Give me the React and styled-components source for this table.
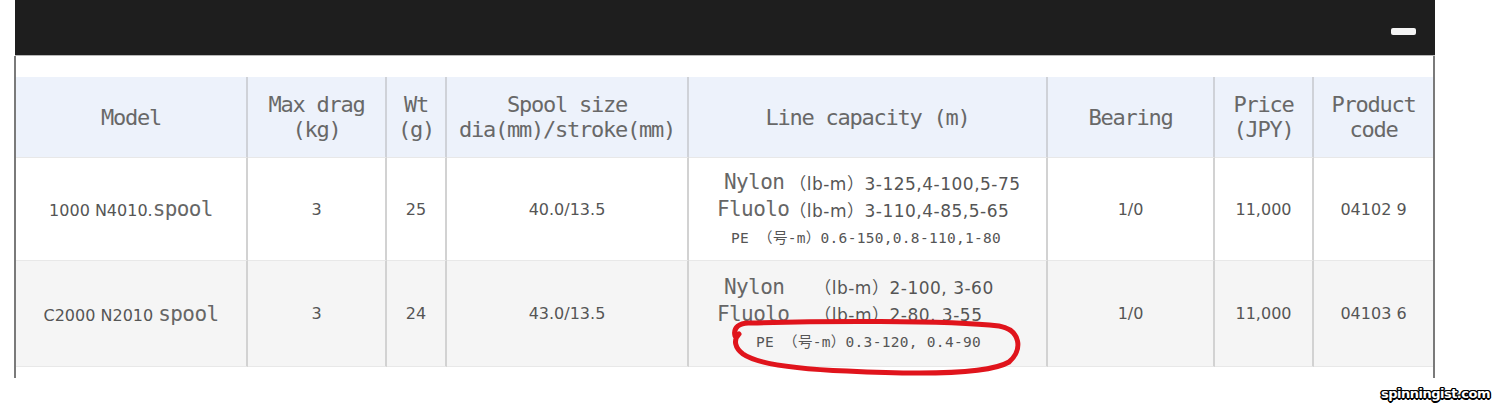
import React from "react";
import styled, { createGlobalStyle } from "styled-components";

const Global = createGlobalStyle`
  html, body { margin: 0; padding: 0; background: #fff; }
  * { box-sizing: border-box; }
`;

const MONO = `"DejaVu Sans Mono", "Noto Sans CJK JP", monospace`;
const SANS = `"DejaVu Sans", "Noto Sans CJK JP", sans-serif`;

const Page = styled.div`
  width: 1500px;
  height: 415px;
  background: #fff;
  overflow: hidden;
`;

const Panel = styled.div`
  margin-left: 14px;
  width: 1421px;
`;

const TopBar = styled.div`
  height: 56px;
  background: #1e1e1e;
  border-bottom: 1px solid #b8b8b8;
  margin-left: 1px;
  display: flex;
  justify-content: flex-end;
  align-items: flex-start;
  padding: 28px 19px 0 0;
`;

const MinusButton = styled.div`
  width: 25px;
  height: 7px;
  border-radius: 2px;
  background: #f4f4f4;
`;

const PanelBody = styled.div`
  border-left: 2px solid #7a7a7a;
  border-right: 2px solid #7a7a7a;
  padding: 21px 0 11px;
`;

const SpecGrid = styled.div`
  display: grid;
  grid-template-columns: 232px 139px 60px 242px 359px 167px 99px 119px;
  grid-template-rows: 80px 103px 107px;
`;

const HeadCell = styled.div`
  background: #edf2fb;
  border-right: ${(p) => (p.$last ? "none" : "2px solid #cfd2d8")};
  display: flex;
  align-items: center;
  justify-content: center;
  text-align: center;
  font-family: ${MONO};
  font-size: 22px;
  letter-spacing: -1.25px;
  line-height: 25px;
  color: #686868;
  white-space: pre;
`;

const BodyCell = styled.div`
  position: relative;
  background: ${(p) => (p.$alt ? "#f5f5f5" : "#ffffff")};
  border-right: ${(p) => (p.$last ? "none" : "2px solid #d2d2d2")};
  border-top: 1px solid #e8e8e8;
  border-bottom: ${(p) => (p.$alt ? "1px solid #e8e8e8" : "none")};
  display: flex;
  align-items: center;
  justify-content: center;
  font-family: ${SANS};
  font-size: 16px;
  color: #555;
  white-space: pre;
`;

const CapCell = styled(BodyCell)`
  flex-direction: column;
  align-items: stretch;
  justify-content: center;
`;

const CapLine = styled.div`
  height: 27px;
  display: flex;
  align-items: center;
  padding-left: ${(p) => p.$indent}px;
`;

const MonoWord = styled.span`
  font-family: ${MONO};
  font-size: 21px;
  letter-spacing: -0.6px;
  color: #666;
  margin-right: ${(p) => p.$gap || 0}px;
`;

const Spec = styled.span`
  font-family: ${SANS};
  font-size: 17px;
  letter-spacing: 0.5px;
  color: #555;
`;

const PeText = styled.span`
  font-family: ${MONO};
  font-size: 14.5px;
  letter-spacing: 0.3px;
  color: #555;
`;

const Annotation = styled.svg`
  position: absolute;
  left: 38px;
  top: 57px;
  width: 300px;
  height: 62px;
  overflow: visible;
  pointer-events: none;
`;

const Footer = styled.div`
  display: flex;
  justify-content: flex-end;
  padding: 8px 10px 0 0;
`;

const Watermark = styled.span`
  font-family: "DejaVu Sans", sans-serif;
  font-weight: bold;
  font-size: 13px;
  letter-spacing: -0.5px;
  color: #fff;
  text-shadow: 1.5px 0 0 #000, -1.5px 0 0 #000, 0 1.5px 0 #000, 0 -1.5px 0 #000,
    1px 1px 0 #000, -1px -1px 0 #000, 1px -1px 0 #000, -1px 1px 0 #000;
`;

const headers = [
  "Model",
  "Max drag\n(kg)",
  "Wt\n(g)",
  "Spool size\ndia(mm)/stroke(mm)",
  "Line capacity (m)",
  "Bearing",
  "Price\n(JPY)",
  "Product\ncode",
];

const rows = [
  {
    model: "1000 N4010.",
    drag: "3",
    wt: "25",
    spool: "40.0/13.5",
    lines: [
      { indent: 35, label: "Nylon", gap: 5, spec: "（lb-m）3-125,4-100,5-75" },
      { indent: 28, label: "Fluolo", gap: 0, spec: "（lb-m）3-110,4-85,5-65" },
      { indent: 42, pe: "PE （号-m）0.6-150,0.8-110,1-80" },
    ],
    bearing: "1/0",
    price: "11,000",
    code: "04102 9",
  },
  {
    model: "C2000 N2010 ",
    drag: "3",
    wt: "24",
    spool: "43.0/13.5",
    lines: [
      { indent: 35, label: "Nylon", gap: 30, spec: "（lb-m）2-100, 3-60" },
      { indent: 28, label: "Fluolo", gap: 25, spec: "（lb-m）2-80, 3-55" },
      { indent: 67, pe: "PE （号-m）0.3-120, 0.4-90" },
    ],
    bearing: "1/0",
    price: "11,000",
    code: "04103 6",
    circled: true,
  },
];

function Row({ row, alt }) {
  return (
    <>
      <BodyCell $alt={alt}>
        <span>
          {row.model}
          <MonoWord>spool</MonoWord>
        </span>
      </BodyCell>
      <BodyCell $alt={alt}>{row.drag}</BodyCell>
      <BodyCell $alt={alt}>{row.wt}</BodyCell>
      <BodyCell $alt={alt}>{row.spool}</BodyCell>
      <CapCell $alt={alt}>
        {row.lines.map((l, i) => (
          <CapLine key={i} $indent={l.indent}>
            {l.pe ? (
              <PeText>{l.pe}</PeText>
            ) : (
              <>
                <MonoWord $gap={l.gap}>{l.label}</MonoWord>
                <Spec>{l.spec}</Spec>
              </>
            )}
          </CapLine>
        ))}
        {row.circled && (
          <Annotation viewBox="0 0 300 62">
            <path
              d="M 8 18 C 6 10, 12 4, 24 5 C 90 3, 220 2, 272 8 C 294 12, 296 32, 282 44 C 262 56, 200 57, 120 53 C 70 51, 30 46, 16 36 C 8 30, 6 22, 12 16"
              fill="none"
              stroke="#e0141c"
              strokeWidth="5"
              strokeLinecap="round"
              strokeLinejoin="round"
            />
          </Annotation>
        )}
      </CapCell>
      <BodyCell $alt={alt}>{row.bearing}</BodyCell>
      <BodyCell $alt={alt}>{row.price}</BodyCell>
      <BodyCell $alt={alt} $last>
        {row.code}
      </BodyCell>
    </>
  );
}

export default function App() {
  return (
    <Page>
      <Global />
      <Panel>
        <TopBar>
          <MinusButton />
        </TopBar>
        <PanelBody>
          <SpecGrid>
            {headers.map((h, i) => (
              <HeadCell key={h} $last={i === headers.length - 1}>
                {h}
              </HeadCell>
            ))}
            {rows.map((r, i) => (
              <Row key={i} row={r} alt={i === 1} />
            ))}
          </SpecGrid>
        </PanelBody>
      </Panel>
      <Footer>
        <Watermark>spinningist.com</Watermark>
      </Footer>
    </Page>
  );
}
